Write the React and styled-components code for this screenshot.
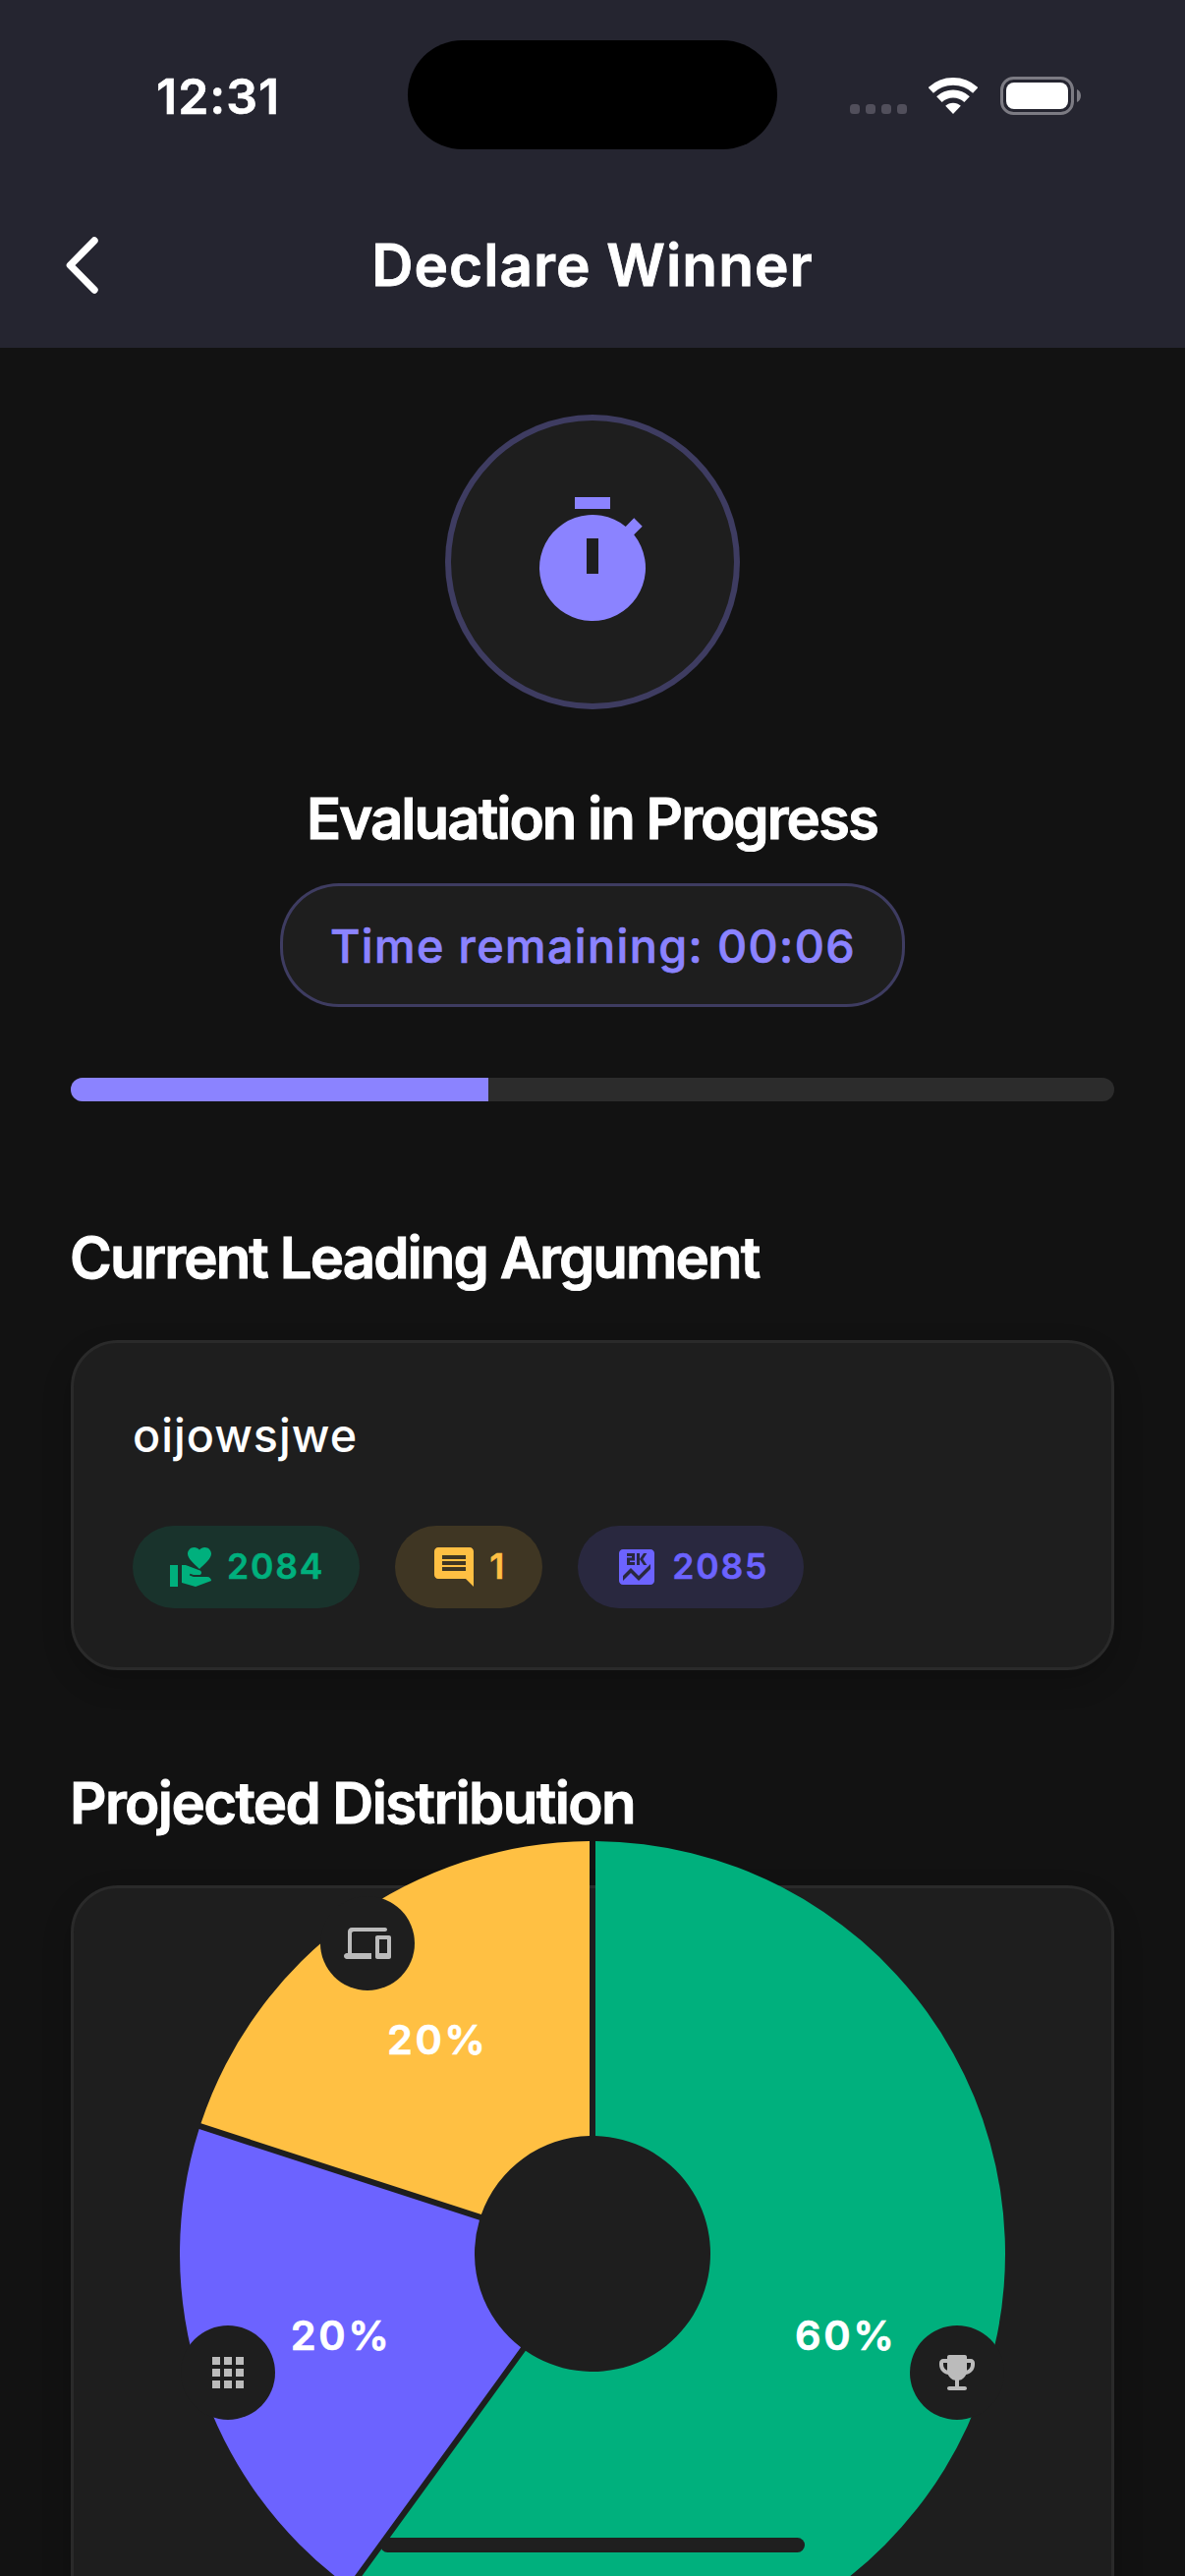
import React from 'react';
import styled, { createGlobalStyle } from 'styled-components';
import { MdVolunteerActivism, MdComment, MdScore, MdApps } from 'react-icons/md';

const color = {
  bar: '#252530',
  page: '#121212',
  surface: '#1e1e1e',
  outline: '#2a2a2a',
  track: '#2c2c2c',
  accent: '#8b83ff',
  accentLine: 'rgba(139, 131, 255, 0.3)',
  green: '#00b07d',
  yellow: '#ffc043',
  purple: '#6c63ff',
  muted: '#bbbbbb',
};

const GlobalStyle = createGlobalStyle`
  *, *::before, *::after { box-sizing: border-box; }
  body {
    margin: 0;
    background: ${color.page};
    color: #fff;
    font-family: Inter, "Liberation Sans", sans-serif;
  }
`;

const Screen = styled.div`
  position: relative;
  width: 1206px;
  height: 2622px;
  overflow: hidden;
  background: ${color.page};
`;

/* Top bars */

const Header = styled.header`
  background: ${color.bar};
  height: 354px;
`;

const StatusBar = styled.div`
  display: grid;
  grid-template-columns: 1fr 376px 1fr;
  align-items: center;
  height: 186px;
  padding-top: 9px;
`;

const Clock = styled.div`
  padding-left: 159px;
  font-size: 50px;
  font-weight: 600;
  line-height: 60px;
  letter-spacing: 1px;
  -webkit-text-stroke: 0.6px currentColor;
`;

const Island = styled.div`
  height: 111px;
  margin-top: -2px;
  border-radius: 56px;
  background: #000;
`;

const StatusIcons = styled.div`
  display: flex;
  align-items: center;
  justify-content: flex-end;
  padding-right: 106px;
`;

const SignalDots = styled.div`
  display: flex;
  gap: 6px;
  margin: 27px 22px 0 0;
`;

const SignalDot = styled.span`
  width: 10px;
  height: 10px;
  border-radius: 3.5px;
  background: #514f5b;
`;

const WifiIcon = styled.svg`
  width: 50px;
  height: 37px;
  margin-right: 23px;
`;

const BatteryIcon = styled.svg`
  width: 82px;
  height: 39px;
`;

const NavBar = styled.nav`
  display: grid;
  grid-template-columns: 1fr auto 1fr;
  align-items: center;
  height: 168px;
`;

const BackButton = styled.button`
  display: flex;
  padding: 0 0 0 67px;
  border: 0;
  background: none;
  color: #fff;
`;

const NavTitle = styled.h1`
  margin: 0;
  font-size: 58.5px;
  font-weight: 600;
  line-height: 72px;
  letter-spacing: 1px;
  -webkit-text-stroke: 0.8px currentColor;
`;

/* Evaluation status */

const Content = styled.main`
  padding: 68px 72px 0;
`;

const Evaluation = styled.section`
  display: flex;
  flex-direction: column;
  align-items: center;
`;

const TimerCircle = styled.div`
  display: flex;
  align-items: center;
  justify-content: center;
  width: 300px;
  height: 300px;
  border: 6px solid ${color.accentLine};
  border-radius: 50%;
  background: ${color.surface};
  color: ${color.accent};
`;

const Heading = styled.h2`
  margin: ${(p) => p.$top}px 0 0 -1px;
  font-size: 58.2px;
  font-weight: 600;
  line-height: 72px;
  letter-spacing: ${(p) => p.$tracking}px;
  white-space: nowrap;
  -webkit-text-stroke: 0.9px currentColor;
`;

const TimePill = styled.div`
  display: flex;
  align-items: center;
  justify-content: center;
  width: 636px;
  height: 126px;
  margin-top: 30px;
  padding: 2px 0 0 1px;
  border: 3px solid ${color.accentLine};
  border-radius: 60px;
  background: ${color.surface};
  color: ${color.accent};
  font-size: 46.7px;
  font-weight: 500;
  line-height: 60px;
  letter-spacing: 1.42px;
  -webkit-text-stroke: 0.7px currentColor;
`;

const ProgressTrack = styled.div`
  width: 100%;
  height: 24px;
  margin-top: 72px;
  border-radius: 12px;
  background: ${color.track};
  overflow: hidden;
`;

const ProgressFill = styled.div`
  height: 100%;
  background: ${color.accent};
`;

/* Cards */

const Card = styled.section`
  margin-top: 48px;
  border: 3px solid ${color.outline};
  border-radius: 48px;
  background: ${color.surface};
  box-shadow: 0 12px 30px rgba(0, 0, 0, 0.2);
`;

const ArgumentCard = styled(Card)`
  padding: 58px 60px 60px;
`;

const ArgumentText = styled.p`
  margin: 0;
  font-size: 46.7px;
  font-weight: 500;
  line-height: 72px;
  letter-spacing: 1px;
`;

const Chips = styled.div`
  display: flex;
  gap: 36px;
  margin-top: 56px;
`;

const Chip = styled.div`
  display: flex;
  align-items: center;
  gap: 12px;
  height: 84px;
  padding: 0 36px;
  border-radius: 42px;
  background: ${(p) => p.$tone}26;
  color: ${(p) => p.$tone};
`;

const ChipValue = styled.span`
  min-width: 18px;
  font-size: 35.5px;
  font-weight: 600;
  line-height: 48px;
  letter-spacing: 1.85px;
  -webkit-text-stroke: 0.5px currentColor;
`;

/* Distribution chart */

const ChartCard = styled(Card)`
  display: flex;
  justify-content: center;
  height: 900px;
`;

const Chart = styled.div`
  position: relative;
  flex: none;
  width: 840px;
  height: 840px;
  margin-top: -48px;
`;

const Donut = styled.svg`
  display: block;
  width: 840px;
  height: 840px;
`;

const SliceLabel = styled.span`
  position: absolute;
  left: ${(p) => p.$x + 1}px;
  top: ${(p) => p.$y}px;
  transform: translate(-50%, -50%);
  font-size: 41.5px;
  font-weight: 600;
  line-height: 48px;
  letter-spacing: 2.6px;
  -webkit-text-stroke: 0.7px currentColor;
`;

const SliceBadge = styled.span`
  position: absolute;
  left: ${(p) => p.$x - 48}px;
  top: ${(p) => p.$y - 48}px;
  display: flex;
  align-items: center;
  justify-content: center;
  width: 96px;
  height: 96px;
  border-radius: 50%;
  background: ${color.surface};
  color: ${color.muted};
`;

const HomeIndicator = styled.div`
  position: absolute;
  left: 387px;
  bottom: 24px;
  width: 432px;
  height: 15px;
  border-radius: 8px;
  background: #1f1f1f;
`;

function TimerIcon() {
  return (
    <svg width="144" height="144" viewBox="0 0 24 24" fill="currentColor" fillRule="evenodd">
      <path d="M15 1H9v2h6V1zm-4 13h2V8h-2v6zm8.03-6.61l1.42-1.42c-.45-.45-.96-.97-1.41-1.41L17.62 5.98A9 9 0 1 0 19.03 7.39z" />
    </svg>
  );
}

function DevicesIcon() {
  return (
    <svg width="48" height="48" viewBox="0 0 24 24" fill="currentColor">
      <path d="M4 7c0-.55.45-1 1-1h16c.55 0 1-.45 1-1s-.45-1-1-1H4c-1.1 0-2 .9-2 2v11h-.5C.67 17 0 17.67 0 18.5S.67 20 1.5 20H14v-3H4V7zm19 1h-6c-.55 0-1 .45-1 1v10c0 .55.45 1 1 1h6c.55 0 1-.45 1-1V9c0-.55-.45-1-1-1zm-1 9h-4v-7h4v7z" />
    </svg>
  );
}

function TrophyIcon() {
  return (
    <svg width="48" height="48" viewBox="0 0 24 24" fill="currentColor">
      <path d="M19 5h-2V4c0-.55-.45-1-1-1H8c-.55 0-1 .45-1 1v1H5c-1.1 0-2 .9-2 2v1c0 2.55 1.92 4.63 4.39 4.94.63 1.5 1.98 2.63 3.61 2.96V19H8c-.55 0-1 .45-1 1s.45 1 1 1h8c.55 0 1-.45 1-1s-.45-1-1-1h-3v-3.1c1.63-.33 2.98-1.46 3.61-2.96C19.08 12.63 21 10.55 21 8V7c0-1.1-.9-2-2-2zM5 8V7h2v3.82C5.84 10.4 5 9.3 5 8zm14 0c0 1.3-.84 2.4-2 2.82V7h2v1z" />
    </svg>
  );
}

const stats = [
  { tone: color.green, Icon: MdVolunteerActivism, value: '2084' },
  { tone: color.yellow, Icon: MdComment, value: '1' },
  { tone: color.purple, Icon: MdScore, value: '2085' },
];

const slices = [
  { share: 60, fill: color.green, icon: <TrophyIcon /> },
  { share: 20, fill: color.purple, icon: <MdApps size={48} /> },
  { share: 20, fill: color.yellow, icon: <DevicesIcon /> },
];

const OUTER = 420;
const INNER = 120;
const HALF_GAP = 3;

const pointAt = (angle, r) => [OUTER + r * Math.sin(angle), OUTER - r * Math.cos(angle)];

// Ring segment whose straight sides run parallel to the radius, leaving an even gap.
function slicePath(start, end) {
  const large = end - start > Math.PI ? 1 : 0;
  const trimOuter = Math.asin(HALF_GAP / OUTER);
  const trimInner = Math.asin(HALF_GAP / INNER);
  const a = pointAt(start + trimOuter, OUTER);
  const b = pointAt(end - trimOuter, OUTER);
  const c = pointAt(end - trimInner, INNER);
  const d = pointAt(start + trimInner, INNER);
  return `M${a}A${OUTER} ${OUTER} 0 ${large} 1 ${b}L${c}A${INNER} ${INNER} 0 ${large} 0 ${d}Z`;
}

function DistributionChart() {
  let turned = 0;
  const parts = slices.map((slice) => {
    const start = (turned / 100) * Math.PI * 2;
    turned += slice.share;
    const end = (turned / 100) * Math.PI * 2;
    return { ...slice, start, end, mid: (start + end) / 2 };
  });
  return (
    <Chart>
      <Donut viewBox="0 0 840 840">
        {parts.map((p) => (
          <path key={p.fill} d={slicePath(p.start, p.end)} fill={p.fill} />
        ))}
      </Donut>
      {parts.map((p) => {
        const [lx, ly] = pointAt(p.mid, 270);
        const [bx, by] = pointAt(p.mid, 390);
        return (
          <React.Fragment key={p.fill}>
            <SliceLabel $x={lx} $y={ly}>{p.share}%</SliceLabel>
            <SliceBadge $x={bx} $y={by}>{p.icon}</SliceBadge>
          </React.Fragment>
        );
      })}
    </Chart>
  );
}

export default function App() {
  return (
    <Screen>
      <GlobalStyle />
      <Header>
        <StatusBar>
          <Clock>12:31</Clock>
          <Island />
          <StatusIcons>
            <SignalDots>
              <SignalDot />
              <SignalDot />
              <SignalDot />
              <SignalDot />
            </SignalDots>
            <WifiIcon viewBox="0 0 50 37" fill="none" stroke="#fff">
              <path d="M2.3 12.9A33.1 33.1 0 0 1 47.7 12.9" strokeWidth="7.6" />
              <path d="M10.9 22.1A20.5 20.5 0 0 1 39.1 22.1" strokeWidth="8" />
              <path d="M17.2 28.8A11.3 11.3 0 0 1 32.8 28.8L25 37Z" fill="#fff" stroke="none" />
            </WifiIcon>
            <BatteryIcon viewBox="0 0 82 39">
              <rect x="1.5" y="1.5" width="72" height="36" rx="12" fill="none" stroke="#7c7b83" strokeWidth="3" />
              <rect x="6" y="6" width="63" height="27" rx="8" fill="#fff" />
              <path d="M78 13C80.6 14.2 82 16.6 82 19.5S80.6 24.8 78 26Z" fill="#7c7b83" />
            </BatteryIcon>
          </StatusIcons>
        </StatusBar>
        <NavBar>
          <BackButton aria-label="Back">
            <svg width="36" height="60" viewBox="0 0 36 60" fill="none" stroke="currentColor" strokeWidth="7.4" strokeLinecap="round" strokeLinejoin="round">
              <path d="M29 5L4.4 30L29 55" />
            </svg>
          </BackButton>
          <NavTitle>Declare Winner</NavTitle>
        </NavBar>
      </Header>

      <Content>
        <Evaluation>
          <TimerCircle>
            <TimerIcon />
          </TimerCircle>
          <Heading $top={75} $tracking={-2}>Evaluation in Progress</Heading>
          <TimePill>Time remaining: 00:06</TimePill>
          <ProgressTrack>
            <ProgressFill style={{ width: '40%' }} />
          </ProgressTrack>
        </Evaluation>

        <Heading $top={123} $tracking={-1.94}>Current Leading Argument</Heading>
        <ArgumentCard>
          <ArgumentText>oijowsjwe</ArgumentText>
          <Chips>
            {stats.map(({ tone, Icon, value }) => (
              <Chip key={value} $tone={tone}>
                <Icon size={48} />
                <ChipValue>{value}</ChipValue>
              </Chip>
            ))}
          </Chips>
        </ArgumentCard>

        <Heading $top={99} $tracking={-1.64}>Projected Distribution</Heading>
        <ChartCard>
          <DistributionChart />
        </ChartCard>
      </Content>
      <HomeIndicator />
    </Screen>
  );
}
